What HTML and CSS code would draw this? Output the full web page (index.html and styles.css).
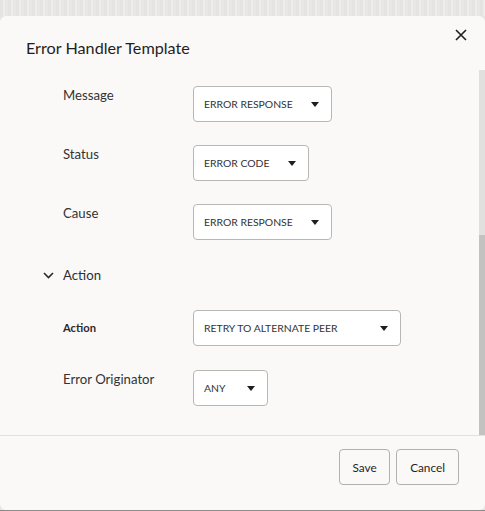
FILE: index.html
```html
<!DOCTYPE html>
<html lang="en">
<head>
<meta charset="utf-8">
<title>Error Handler Template</title>
<link rel="stylesheet" href="styles.css">
</head>
<body>
<div class="backdrop-top"></div>
<div class="dialog">
  <div class="dialog-header">
    <h1 class="dialog-title">Error Handler Template</h1>
    <button class="close-btn" aria-label="Close">
      <svg width="12" height="12" viewBox="0 0 12 12"><path d="M1 1 L11 11 M11 1 L1 11" stroke="#1f1f1f" stroke-width="1.6" fill="none"/></svg>
    </button>
  </div>
  <div class="dialog-body">
    <div class="content">
      <div class="row">
        <div class="label">Message</div>
        <div class="select w-139"><span class="select-text">ERROR RESPONSE</span><span class="caret"></span></div>
      </div>
      <div class="row">
        <div class="label">Status</div>
        <div class="select w-116"><span class="select-text">ERROR CODE</span><span class="caret"></span></div>
      </div>
      <div class="row">
        <div class="label">Cause</div>
        <div class="select w-139"><span class="select-text">ERROR RESPONSE</span><span class="caret"></span></div>
      </div>
      <div class="section-header">
        <svg class="chevron" width="11" height="7" viewBox="0 0 11 7"><path d="M1 1 L5.5 5.5 L10 1" stroke="#2a2a2a" stroke-width="1.6" fill="none"/></svg>
        <span class="section-title">Action</span>
      </div>
      <div class="row row-center">
        <div class="label label-strong">Action</div>
        <div class="select w-208"><span class="select-text">RETRY TO ALTERNATE PEER</span><span class="caret"></span></div>
      </div>
      <div class="row">
        <div class="label">Error Originator</div>
        <div class="select w-75"><span class="select-text">ANY</span><span class="caret"></span></div>
      </div>
    </div>
    <div class="scrollbar"><div class="scroll-thumb"></div></div>
  </div>
  <div class="dialog-footer">
    <button class="btn btn-save">Save</button>
    <button class="btn">Cancel</button>
  </div>
</div>
<div class="backdrop-bottom"></div>
</body>
</html>
```
FILE: styles.css
```css
* { box-sizing: border-box; }
html, body { margin: 0; padding: 0; }
body {
  width: 485px;
  height: 511px;
  overflow: hidden;
  background: #e6e5e3;
  font-family: Lato, "Noto Sans", sans-serif;
  color: #2f2f2f;
}
.backdrop-top {
  height: 16px;
  background: repeating-linear-gradient(90deg, #e4e3e1 0 3px, #eeedeb 3px 5px, #e8e7e5 5px 8px);
}
.dialog {
  height: 494px;
  background: #faf9f8;
  border-radius: 6px;
  display: flex;
  flex-direction: column;
}
.dialog-header {
  display: flex;
  justify-content: space-between;
  align-items: flex-start;
  height: 54px;
  padding: 0 0 0 26px;
}
.dialog-title {
  margin: 21px 0 0;
  font-size: 16.2px;
  font-weight: 400;
  color: #1f1f1f;
  line-height: 22px;
}
.close-btn {
  border: 0;
  background: transparent;
  padding: 0;
  margin: 13px 18px 0 0;
  width: 12px;
  height: 12px;
  display: flex;
}
.dialog-body {
  flex: 1;
  display: flex;
  min-height: 0;
}
.content {
  flex: 1;
  padding: 16px 0 0 63px;
  display: flex;
  flex-direction: column;
}
.row {
  display: flex;
  align-items: flex-start;
  margin-bottom: 23px;
}
.row-center { align-items: center; margin-bottom: 24px; }
.label {
  width: 130px;
  flex-shrink: 0;
  font-size: 13.2px;
  line-height: 18px;
  padding-top: 0;
  color: #333;
}
.label-strong { font-weight: 700; font-size: 11.2px; color: #2a2a2a; }
.select {
  height: 36px;
  flex-shrink: 0;
  display: flex;
  align-items: center;
  background: #fff;
  border: 1px solid #b9b7b4;
  border-radius: 4px;
  padding: 0 12px 0 10px;
}
.w-139 { width: 139px; }
.w-116 { width: 116px; }
.w-208 { width: 208px; }
.w-75 { width: 75px; }
.select-text {
  flex: 1;
  font-size: 10.4px;
  color: #333;
  white-space: nowrap;
}
.caret {
  width: 0;
  height: 0;
  border-left: 4.5px solid transparent;
  border-right: 4.5px solid transparent;
  border-top: 5px solid #1f1f1f;
}
.section-header {
  display: flex;
  align-items: center;
  height: 24px;
  margin: 0 0 23px -20px;
}
.chevron { margin-right: 9px; }
.section-title { font-size: 13.2px; color: #2f2f2f; }
.scrollbar {
  width: 6px;
  background: #e1e0de;
  display: flex;
  flex-direction: column;
  justify-content: flex-end;
}
.scroll-thumb {
  height: 200px;
  background: #c3c2c0;
}
.dialog-footer {
  height: 75px;
  border-top: 1px solid #e2e1df;
  display: flex;
  justify-content: flex-end;
  align-items: flex-start;
  gap: 6px;
  padding: 13px 26px 0 0;
}
.btn {
  height: 36px;
  border: 1px solid #b3b1ae;
  border-radius: 4px;
  background: #faf9f8;
  font-family: inherit;
  font-size: 11.8px;
  color: #1f1f1f;
  padding: 0 13px;
}
.btn-save { width: 51px; padding: 0; }
.backdrop-bottom {
  height: 1px;
  background: #8d8b89;
}
```
